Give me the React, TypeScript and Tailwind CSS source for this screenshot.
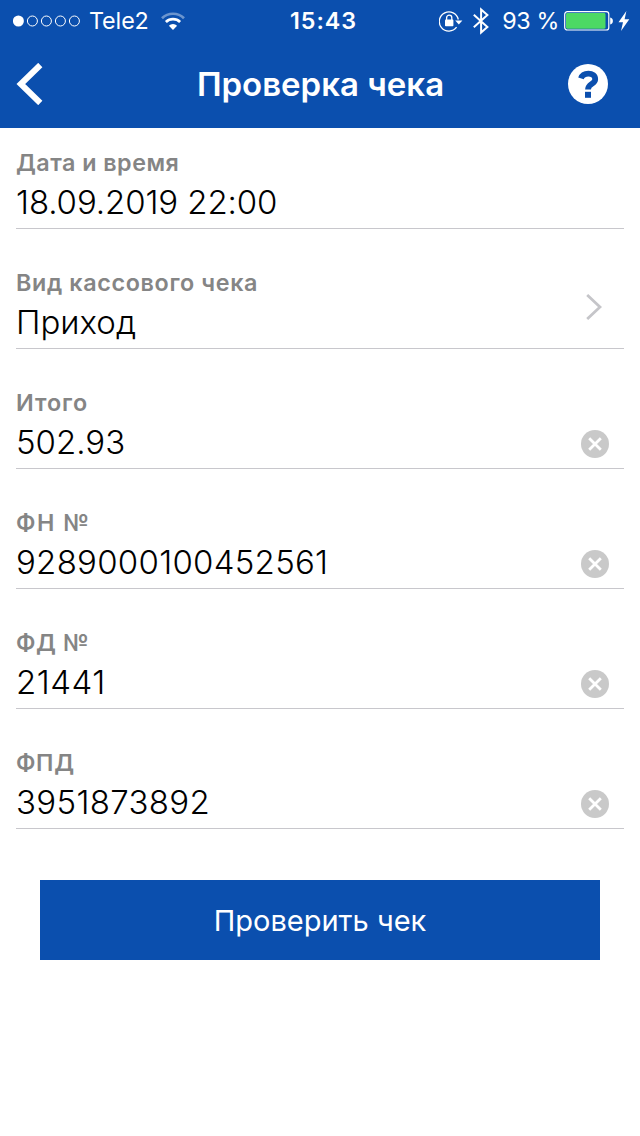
import { useState } from 'react';

interface Field {
  id: string;
  label: string;
  value: string;
  kind: 'plain' | 'select' | 'input';
  labelClass: string;
  valueClass: string;
}

const initialFields: Field[] = [
  { id: 'date', label: 'Дата и время', value: '18.09.2019 22:00', kind: 'plain', labelClass: 'tracking-[0.48px]', valueClass: 'tracking-[-0.1px]' },
  { id: 'type', label: 'Вид кассового чека', value: 'Приход', kind: 'select', labelClass: 'tracking-[0.65px]', valueClass: 'tracking-[0px]' },
  { id: 'total', label: 'Итого', value: '502.93', kind: 'input', labelClass: 'tracking-[0.95px]', valueClass: 'tracking-[0px]' },
  { id: 'fn', label: 'ФН №', value: '9289000100452561', kind: 'input', labelClass: 'tracking-[1.5px]', valueClass: 'tracking-[0.27px]' },
  { id: 'fd', label: 'ФД №', value: '21441', kind: 'input', labelClass: 'tracking-[0.6px]', valueClass: 'tracking-[0.5px]' },
  { id: 'fpd', label: 'ФПД', value: '3951873892', kind: 'input', labelClass: 'tracking-[0.7px]', valueClass: 'tracking-[0.33px]' },
];

function SignalDots() {
  return (
    <svg className="w-[68px] h-3 shrink-0" viewBox="0 0 68 12" fill="none" stroke="white">
      <circle cx="5.4" cy="6" r="5.5" fill="white" stroke="none" />
      {[19.4, 33.4, 47.4, 61.4].map(cx => (
        <circle key={cx} cx={cx} cy="6" r="5" strokeWidth="1" />
      ))}
    </svg>
  );
}

function WifiIcon() {
  return (
    <svg className="w-6 h-[18px] shrink-0" viewBox="0 0 24 18" fill="none" stroke="white" strokeWidth="2.7">
      <path d="M1 6.3A15.6 15.6 0 0 1 23 6.3" opacity="0.4" />
      <path d="M4.9 10A10.2 10.2 0 0 1 19.1 10" />
      <path d="M12 18L7.9 13.8A5.8 5.8 0 0 1 16.1 13.8Z" fill="white" stroke="none" />
    </svg>
  );
}

function RotationLockIcon() {
  return (
    <svg className="w-6 h-[21px] shrink-0" viewBox="0 0 24 21" fill="none" stroke="white">
      <path d="M19.3 8.5A9.6 9.6 0 1 0 17.6 16.2" strokeWidth="1.3" />
      <path d="M16.2 9.4H23.4L19.8 13.4Z" fill="white" stroke="none" />
      <rect x="6" y="8.6" width="8.4" height="6.6" rx="0.8" fill="white" stroke="none" />
      <path d="M7.6 9.5V6.8A2.6 2.6 0 0 1 12.8 6.8V9.5" strokeWidth="1.3" />
    </svg>
  );
}

function BluetoothIcon() {
  return (
    <svg className="block w-4 h-7 shrink-0" viewBox="0 0 16 28" fill="none" stroke="white" strokeWidth="2">
      <path d="M0.8 7.7L14.4 19.9L8.1 25.5V2.5L14.4 8.1L0.8 20.3" />
    </svg>
  );
}

function BatteryIcon() {
  return (
    <svg className="w-[50px] h-5 shrink-0" viewBox="0 0 50 20">
      <rect x="0.7" y="0.7" width="44.1" height="18.3" rx="2.6" fill="none" stroke="white" strokeWidth="1.2" />
      <rect x="2" y="2" width="39.5" height="15.7" rx="1.4" fill="#4cd964" />
      <path d="M46.2 6.4C49.8 7.2 49.8 12.6 46.2 13.4Z" fill="white" />
    </svg>
  );
}

function ClearButton({ onClick }: { onClick: () => void }) {
  return (
    <button onClick={onClick} className="mr-[15px] mb-2.5 self-end shrink-0">
      <svg className="block w-7 h-7" viewBox="0 0 28 28" fill="none">
        <circle cx="14" cy="14" r="14" fill="#c9c9c9" />
        <path d="M8.2 8.2L19.8 19.8M19.8 8.2L8.2 19.8" stroke="white" strokeWidth="2.8" />
      </svg>
    </button>
  );
}

export default function App() {
  const [fields, setFields] = useState(initialFields);

  function clearField(id: string) {
    setFields(fields.map(f => (f.id === id ? { ...f, value: '' } : f)));
  }

  return (
    <div className="w-[640px] h-[1136px] bg-white flex flex-col overflow-hidden font-['Inter',sans-serif]">
      <header className="h-32 bg-[#0b4fae] text-white shrink-0">
        <div className="h-10 pt-0.5 grid grid-cols-[1fr_auto_1fr] items-center text-[23.3px] leading-[38px] whitespace-nowrap">
          <div className="flex items-center pl-[13px]">
            <SignalDots />
            <span className="ml-2 mr-3 tracking-[-0.1px]">Tele2</span>
            <WifiIcon />
          </div>
          <span className="pl-[7px] font-semibold tracking-[0.9px]">15:43</span>
          <div className="flex items-center justify-end pr-2.5">
            <RotationLockIcon />
            <span className="ml-2.5"><BluetoothIcon /></span>
            <span className="ml-[13px] mr-[5px] tracking-[-0.4px]">93 %</span>
            <BatteryIcon />
            <svg className="w-3 h-5 ml-1 shrink-0" viewBox="0 0 12 20" fill="white">
              <path d="M8.4 0L0.5 11.3H5L3 20L11.3 8.2H6.6Z" />
            </svg>
          </div>
        </div>
        <div className="h-[88px] grid grid-cols-[80px_1fr_80px] items-center">
          <button className="pl-4">
            <svg className="block w-7 h-[42px]" viewBox="0 0 28 42" fill="none" stroke="white" strokeWidth="6">
              <path d="M24.3 2L4.8 21L24.3 40" />
            </svg>
          </button>
          <h1 className="pl-px text-center text-[33px] leading-[44px] font-semibold">Проверка чека</h1>
          <button className="pl-2">
            <svg className="block w-10 h-10" viewBox="0 0 40 40" fill="none">
              <circle cx="20" cy="20" r="20" fill="white" />
              <path d="M13 14.4C14 11.2 17 9.6 20.4 9.6C24.3 9.6 27.2 11.8 27.2 15.2C27.2 20.2 20 19.6 20 25.4" stroke="#0b4fae" strokeWidth="5.8" />
              <rect x="17" y="27.8" width="6" height="6" fill="#0b4fae" />
            </svg>
          </button>
        </div>
      </header>

      <main className="px-4 flex flex-col gap-[19px]">
        {fields.map(field => (
          <div key={field.id} className="h-[101px] flex border-b border-[#c8c7cc]">
            <div className="flex-1 pt-5">
              <div className={`text-[23.3px] leading-[30px] font-semibold text-[#858585] ${field.labelClass}`}>{field.label}</div>
              <div className={`mt-1 text-[33px] leading-10 font-light text-black ${field.valueClass}`}>{field.value}</div>
            </div>
            {field.kind === 'select' && (
              <svg className="w-4 h-[26px] mt-[46px] mr-[22px] shrink-0" viewBox="0 0 16 26" fill="none" stroke="#c5c5c9" strokeWidth="2.8">
                <path d="M1.2 1L14 13L1.2 25" />
              </svg>
            )}
            {field.kind === 'input' && <ClearButton onClick={() => clearField(field.id)} />}
          </div>
        ))}
      </main>

      <button className="mx-10 mt-[51px] h-20 pt-0.5 shrink-0 bg-[#0b4fae] text-white text-[29px] leading-10">
        Проверить чек
      </button>
    </div>
  );
}
